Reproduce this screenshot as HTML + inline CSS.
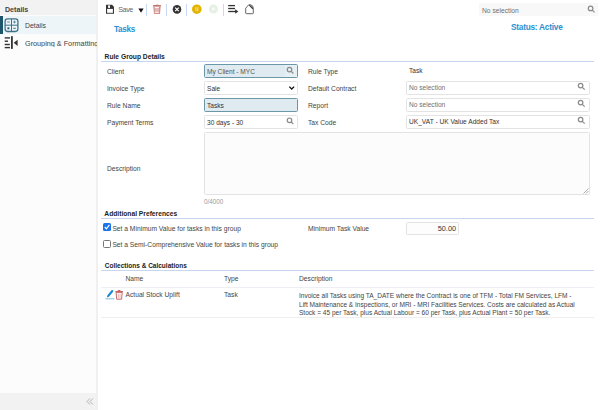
<!DOCTYPE html>
<html><head><meta charset="utf-8">
<style>
*{box-sizing:border-box;margin:0;padding:0}
html,body{width:600px;height:410px;overflow:hidden;background:#fff;font-family:"Liberation Sans",sans-serif;color:#333;font-size:6.7px}
.a{position:absolute;white-space:nowrap;line-height:1}
svg{position:absolute;overflow:visible}
.lbl{position:absolute;white-space:nowrap;font-size:6.7px;color:#444;line-height:1}
.box{position:absolute;height:14px;border:1px solid #e3e3e3;border-radius:1.5px;background:#fff}
.bt{position:absolute;white-space:nowrap;font-size:6.6px;color:#333;line-height:1}
.hd{position:absolute;font-weight:bold;font-size:6.7px;color:#222;white-space:nowrap;line-height:1}
.ln{position:absolute;height:1px;background:#c7d5ee}
.sep{position:absolute;top:4px;width:1px;height:12px;background:#c9d8f3}
</style></head><body>
<div style="position:absolute;left:0;top:0;width:96px;height:410px;background:#fcfcfc"></div>
<div style="position:absolute;left:96px;top:0;width:2px;height:410px;background:#f0f0f0"></div>
<div style="position:absolute;left:0;top:0;width:96px;height:15px;background:#f2f2f2"></div>
<div class="a" style="left:5px;top:6.7px;font-weight:bold;font-size:7.1px;color:#444">Details</div>
<div style="position:absolute;left:0;top:16px;width:96px;height:18px;background:#edf5f9"></div>
<div style="position:absolute;left:0;top:16px;width:3px;height:18px;background:#1d566b"></div>
<svg style="left:0;top:0" width="20" height="34" viewBox="0 0 20 34">
  <rect x="5.1" y="18.9" width="12.8" height="12.6" rx="2.4" fill="none" stroke="#3c7389" stroke-width="1.3"/>
  <line x1="11.5" y1="18.9" x2="11.5" y2="31.5" stroke="#3c7389" stroke-width="1"/>
  <line x1="5.1" y1="25.2" x2="17.9" y2="25.2" stroke="#3c7389" stroke-width="1"/>
  <line x1="7.2" y1="22" x2="9.8" y2="22" stroke="#4a8096" stroke-width="0.9"/>
  <line x1="13.2" y1="22" x2="15.8" y2="22" stroke="#4a8096" stroke-width="0.9"/>
  <line x1="14.5" y1="20.7" x2="14.5" y2="23.3" stroke="#4a8096" stroke-width="0.9"/>
  <rect x="7.4" y="27.3" width="2" height="2" fill="#2a5f75"/>
  <line x1="13.2" y1="28.3" x2="15.8" y2="28.3" stroke="#4a8096" stroke-width="1.1"/>
</svg>
<div class="a" style="left:25px;top:22.5px;font-size:6.9px;color:#444">Details</div>
<svg style="left:0;top:33" width="20" height="20" viewBox="0 33 20 20">
  <g stroke="#333" stroke-width="1.4">
  <line x1="4.7" y1="37.9" x2="10" y2="37.9"/>
  <line x1="4.7" y1="41.2" x2="8" y2="41.2"/>
  <line x1="4.7" y1="44.5" x2="9.8" y2="44.5"/>
  <line x1="4.7" y1="47.6" x2="10" y2="47.6"/>
  </g>
  <rect x="11" y="36.2" width="1.8" height="12.7" fill="#333"/>
  <path d="M13.7 42.8 L17.6 39.8 L17.6 45.9 Z" fill="#333"/>
</svg>
<div class="a" style="left:25px;top:39.6px;font-size:7.25px;color:#444;width:72px;overflow:hidden">Grouping &amp; Formatting</div>
<div style="position:absolute;left:0;top:393px;width:96px;height:17px;background:#f2f2f2"></div>
<svg style="left:0;top:0" width="96" height="410" viewBox="0 0 96 410">
  <path d="M90 398.5 L87 401.5 L90 404.5 M93 398.5 L90 401.5 L93 404.5" fill="none" stroke="#b5b5b5" stroke-width="1"/>
</svg>

<!-- toolbar -->
<svg style="left:0;top:0" width="300" height="20" viewBox="0 0 300 20">
  <!-- save -->
  <path d="M106 4.8 H112.1 L114 6.7 V13.85 H106 Z" fill="#363636"/>
  <rect x="107.1" y="8.9" width="5.8" height="3.9" fill="#fff"/>
  <rect x="108.1" y="5.4" width="1.9" height="2.5" fill="#fff"/>
  <!-- dropdown -->
  <path d="M138.4 8.6 H143.6 L141 12.8 Z" fill="#111"/>
  <!-- trash -->
  <path d="M155.2 5.2 Q157 3.6 158.8 5.2 Z" fill="#c27573"/>
  <rect x="153" y="5" width="8" height="1.6" rx="0.5" fill="#c27573"/>
  <path d="M153.3 6.6 H160.7 L160 13.9 H154 Z" fill="#cf8f8d"/>
  <rect x="154.7" y="8" width="4.2" height="3.9" fill="#e3bab9"/>
  <rect x="154.7" y="7.1" width="4.2" height="0.9" fill="#fff"/>
  <rect x="154.7" y="11.9" width="4.2" height="0.9" fill="#fff"/>
  <!-- close -->
  <circle cx="177" cy="9.4" r="4.3" fill="#333"/>
  <path d="M175.2 7.6 L178.8 11.2 M178.8 7.6 L175.2 11.2" stroke="#fff" stroke-width="1.2"/>
  <!-- pause -->
  <circle cx="196.8" cy="9.2" r="4.8" fill="#e2b400"/>
  <rect x="195.3" y="7.2" width="1.2" height="4" fill="#f3dc80"/>
  <rect x="197.1" y="7.2" width="1.2" height="4" fill="#f3dc80"/>
  <!-- play -->
  <circle cx="213.4" cy="9" r="4.5" fill="#e6f0e4"/>
  <path d="M212.3 7.2 L215.3 9 L212.3 10.8 Z" fill="#fbfdfb"/>
  <!-- list add -->
  <g stroke="#333" stroke-width="1.3">
    <line x1="228.2" y1="5.6" x2="235" y2="5.6"/>
    <line x1="228.2" y1="8.5" x2="235" y2="8.5"/>
    <line x1="228.2" y1="11.5" x2="236" y2="11.5"/>
  </g>
  <path d="M235.2 9.2 L238.3 11.5 L235.2 13.8 Z" fill="#333"/>
  <!-- note -->
  <path d="M245.7 8.2 L248.7 4.8 H250.5 Q253.3 5.2 253.3 8.4 V13 Q253.3 13.7 252.6 13.7 H246.4 Q245.7 13.7 245.7 13 Z" fill="none" stroke="#555" stroke-width="0.9"/>
  <path d="M249.4 5.1 L252.9 8.7" stroke="#3a3a3a" stroke-width="1.3"/>
</svg>
<div class="a" style="left:118.2px;top:5.6px;font-size:7.2px;letter-spacing:-0.4px;color:#666">Save</div>
<div class="sep" style="left:146px"></div>
<div class="sep" style="left:166px"></div>
<div class="sep" style="left:186px"></div>
<div class="sep" style="left:223px"></div>

<div style="position:absolute;left:479px;top:3px;width:119px;height:13px;background:#f8f8f8"></div>
<div class="a" style="left:482px;top:7.8px;font-size:6.7px;color:#707070">No selection</div>

<div class="a" style="left:114px;top:25.6px;font-size:8.2px;letter-spacing:-0.3px;font-weight:bold;color:#2d8fd0">Tasks</div>
<div class="a" style="left:511px;top:22.6px;font-size:8.3px;letter-spacing:-0.25px;font-weight:bold;color:#2d8fd0">Status: Active</div>

<div class="hd" style="left:104.6px;top:54.2px">Rule Group Details</div>
<div class="ln" style="left:101px;top:61px;width:493px"></div>

<div class="lbl" style="left:107px;top:69px">Client</div>
<div class="lbl" style="left:107px;top:86px">Invoice Type</div>
<div class="lbl" style="left:107px;top:103px">Rule Name</div>
<div class="lbl" style="left:107px;top:120px">Payment Terms</div>
<div class="lbl" style="left:107px;top:166px">Description</div>

<div class="box" style="left:204px;top:64px;width:94px;background:#dfebf1;border-color:#6a98a9"></div>
<div style="position:absolute;left:285px;top:65px;width:12px;height:12px;background:#e6f0f4"></div>
<div class="bt" style="left:207px;top:68.5px;color:#555">My Client - MYC</div>
<div class="box" style="left:204px;top:81px;width:94px"></div>
<div class="bt" style="left:207px;top:86px">Sale</div>
<div class="box" style="left:204px;top:98px;width:94px;background:#dfebf1;border-color:#6a98a9"></div>
<div class="bt" style="left:207px;top:103px">Tasks</div>
<div class="box" style="left:204px;top:115px;width:94px"></div>
<div class="bt" style="left:207px;top:119.5px">30 days - 30</div>

<div class="lbl" style="left:308px;top:69px">Rule Type</div>
<div class="lbl" style="left:308px;top:86px">Default Contract</div>
<div class="lbl" style="left:308px;top:103px">Report</div>
<div class="lbl" style="left:308px;top:120px">Tax Code</div>
<div class="bt" style="left:409px;top:68px">Task</div>
<div class="box" style="left:406px;top:81px;width:184px"></div>
<div class="bt" style="left:409px;top:85px;color:#707070">No selection</div>
<div class="box" style="left:406px;top:98px;width:184px"></div>
<div class="bt" style="left:409px;top:102px;color:#707070">No selection</div>
<div class="box" style="left:406px;top:115px;width:184px"></div>
<div class="bt" style="left:409px;top:119px">UK_VAT - UK Value Added Tax</div>

<svg style="left:0;top:0" width="600" height="140" viewBox="0 0 600 140">
  <g fill="none" stroke="#8a8a8a" stroke-width="1.2">
    <circle cx="289.5" cy="69.6" r="2.3"/><line x1="291.2" y1="71.3" x2="293.4" y2="73.5"/>
    <circle cx="289.5" cy="120.3" r="2.3"/><line x1="291.2" y1="122" x2="293.4" y2="124.2"/>
    <circle cx="580.6" cy="85.6" r="2.3"/><line x1="582.3" y1="87.3" x2="584.7" y2="89.7"/>
    <circle cx="580.6" cy="102.6" r="2.3"/><line x1="582.3" y1="104.3" x2="584.7" y2="106.7"/>
    <circle cx="580.6" cy="119.6" r="2.3"/><line x1="582.3" y1="121.3" x2="584.7" y2="123.7"/>
    <circle cx="590.6" cy="8.4" r="2.3"/><line x1="592.3" y1="10.1" x2="594.5" y2="12.3"/>
  </g>
  <path d="M289.3 86.6 L291.7 89 L294.1 86.6" fill="none" stroke="#111" stroke-width="1.3"/>
</svg>

<div class="box" style="left:204px;top:132px;width:386px;height:63px;background:#fcfcfc"></div>
<svg style="left:0;top:0" width="600" height="200" viewBox="0 0 600 200">
  <path d="M583.5 193.5 L588.5 188.5 M586 193.5 L588.5 191" stroke="#999" stroke-width="0.8"/>
</svg>
<div class="a" style="left:204px;top:198.8px;font-size:6.3px;color:#999">0/4000</div>

<div class="hd" style="left:104.3px;top:211px">Additional Preferences</div>
<div class="ln" style="left:101px;top:218px;width:493px"></div>
<div style="position:absolute;left:103px;top:223px;width:8px;height:8px;background:#1b74e8;border-radius:1.5px"></div>
<svg style="left:0;top:0" width="600" height="260" viewBox="0 0 600 260">
  <path d="M104.8 227 L106.4 228.8 L109.4 224.9" fill="none" stroke="#fff" stroke-width="1.2"/>
</svg>
<div class="lbl" style="left:112.4px;top:226px">Set a Minimum Value for tasks in this group</div>
<div style="position:absolute;left:103px;top:240px;width:8px;height:8px;border:1px solid #777;border-radius:1.5px"></div>
<div class="lbl" style="left:112.4px;top:242px">Set a Semi-Comprehensive Value for tasks in this group</div>
<div class="lbl" style="left:308px;top:226px">Minimum Task Value</div>
<div class="box" style="left:406px;top:221.5px;width:53px;height:13.3px;background:#fdfdfd"></div>
<div class="bt" style="left:406px;top:225.2px;width:50px;text-align:right;font-size:7.3px">50.00</div>

<div class="hd" style="left:104.8px;top:263.2px;font-size:6.5px">Collections &amp; Calculations</div>
<div class="ln" style="left:101px;top:270px;width:493px"></div>
<div class="lbl" style="left:125.5px;top:276px">Name</div>
<div class="lbl" style="left:224px;top:276px">Type</div>
<div class="lbl" style="left:299px;top:276px">Description</div>
<div style="position:absolute;left:101px;top:287px;width:493px;height:1px;background:#eeeef4"></div>
<svg style="left:0;top:0" width="600" height="320" viewBox="0 0 600 320">
  <path d="M106.9 297.4 L107.4 295.3 L111.5 290.3 Q112.3 289.6 113 290.3 Q113.7 291 113.1 291.7 L109 296.8 Z" fill="#1a8ad4"/>
  <line x1="105.4" y1="298.8" x2="114.4" y2="298.8" stroke="#7cc0e6" stroke-width="1"/>
  <rect x="115.3" y="291" width="7.7" height="1.2" fill="#c56b69"/>
  <rect x="117.8" y="290" width="2.6" height="1.2" fill="#c56b69"/>
  <path d="M116.1 292.4 H122.2 L121.6 299.2 H116.7 Z" fill="none" stroke="#c56b69" stroke-width="1"/>
  <line x1="118.3" y1="293.6" x2="118.3" y2="298.2" stroke="#dea3a2" stroke-width="0.8"/>
  <line x1="120" y1="293.6" x2="120" y2="298.2" stroke="#dea3a2" stroke-width="0.8"/>
</svg>
<div class="lbl" style="left:125.5px;top:292px">Actual Stock Uplift</div>
<div class="lbl" style="left:224px;top:292px">Task</div>
<div class="lbl" style="left:299px;top:292px;line-height:8.5px;font-size:6.56px">Invoice all Tasks using TA_DATE where the Contract is one of TFM - Total FM Services, LFM -<br>Lift Maintenance &amp; Inspections, or MRI - MRI Facilities Services. Costs are calculated as Actual<br>Stock = 45 per Task, plus Actual Labour = 60 per Task, plus Actual Plant = 50 per Task.</div>
<div style="position:absolute;left:101px;top:317px;width:493px;height:1px;background:#eeeeee"></div>
</body></html>
